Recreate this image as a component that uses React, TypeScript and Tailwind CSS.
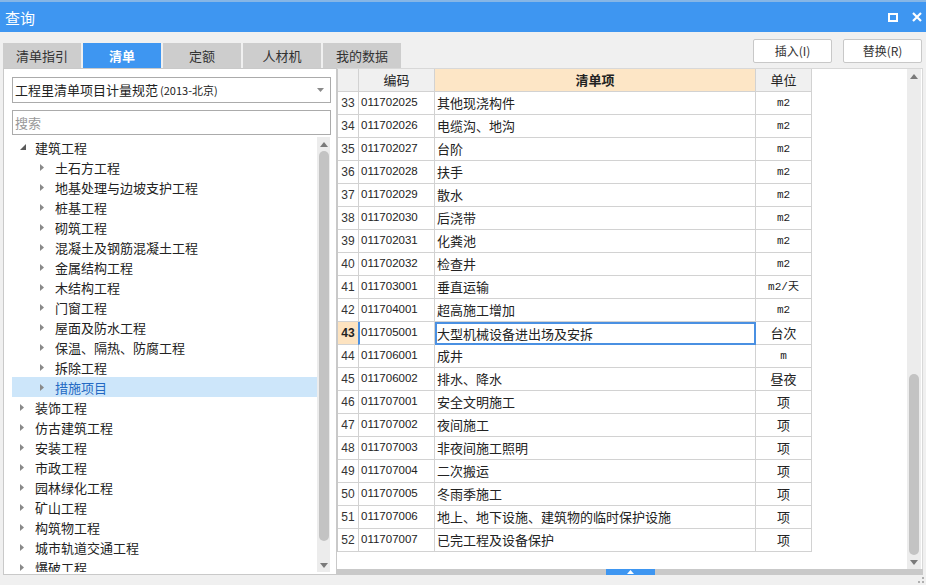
import React from 'react';

const tabs = ['清单指引', '清单', '定额', '人材机', '我的数据'];

const tree: { label: string; level: number; open?: boolean; selected?: boolean }[] = [
  { label: '建筑工程', level: 0, open: true },
  { label: '土石方工程', level: 1 },
  { label: '地基处理与边坡支护工程', level: 1 },
  { label: '桩基工程', level: 1 },
  { label: '砌筑工程', level: 1 },
  { label: '混凝土及钢筋混凝土工程', level: 1 },
  { label: '金属结构工程', level: 1 },
  { label: '木结构工程', level: 1 },
  { label: '门窗工程', level: 1 },
  { label: '屋面及防水工程', level: 1 },
  { label: '保温、隔热、防腐工程', level: 1 },
  { label: '拆除工程', level: 1 },
  { label: '措施项目', level: 1, selected: true },
  { label: '装饰工程', level: 0 },
  { label: '仿古建筑工程', level: 0 },
  { label: '安装工程', level: 0 },
  { label: '市政工程', level: 0 },
  { label: '园林绿化工程', level: 0 },
  { label: '矿山工程', level: 0 },
  { label: '构筑物工程', level: 0 },
  { label: '城市轨道交通工程', level: 0 },
  { label: '爆破工程', level: 0 },
];

const rows: [number, string, string, string][] = [
  [33, '011702025', '其他现浇构件', 'm2'],
  [34, '011702026', '电缆沟、地沟', 'm2'],
  [35, '011702027', '台阶', 'm2'],
  [36, '011702028', '扶手', 'm2'],
  [37, '011702029', '散水', 'm2'],
  [38, '011702030', '后浇带', 'm2'],
  [39, '011702031', '化粪池', 'm2'],
  [40, '011702032', '检查井', 'm2'],
  [41, '011703001', '垂直运输', 'm2/天'],
  [42, '011704001', '超高施工增加', 'm2'],
  [43, '011705001', '大型机械设备进出场及安拆', '台次'],
  [44, '011706001', '成井', 'm'],
  [45, '011706002', '排水、降水', '昼夜'],
  [46, '011707001', '安全文明施工', '项'],
  [47, '011707002', '夜间施工', '项'],
  [48, '011707003', '非夜间施工照明', '项'],
  [49, '011707004', '二次搬运', '项'],
  [50, '011707005', '冬雨季施工', '项'],
  [51, '011707006', '地上、地下设施、建筑物的临时保护设施', '项'],
  [52, '011707007', '已完工程及设备保护', '项'],
];

function Caret({ open }: { open?: boolean }) {
  if (open) {
    return (
      <svg width="6" height="6" viewBox="0 0 6 6">
        <polygon points="6,0 6,6 0,6" fill="#5a5a5a" />
      </svg>
    );
  }
  return (
    <svg width="4" height="7" viewBox="0 0 4 7">
      <polygon points="0,0 4,3.5 0,7" fill="#8a8a8a" />
    </svg>
  );
}

function ScrollBar({ thumbTop, thumbHeight, width }: { thumbTop: number; thumbHeight: number; width: string }) {
  return (
    <div className={`${width} flex flex-col items-center bg-[#ececec]`}>
      <div className="h-[14px] flex items-center justify-center">
        <svg width="8" height="5" viewBox="0 0 8 5">
          <polygon points="0,5 4,0 8,5" fill="#7a7a7a" />
        </svg>
      </div>
      <div className="flex-1 w-full flex flex-col items-center">
        <div style={{ height: thumbTop }} />
        <div className="w-[10px] rounded-full bg-[#c3c3c3]" style={{ height: thumbHeight }} />
        <div className="flex-1" />
      </div>
      <div className="h-[14px] flex items-center justify-center">
        <svg width="8" height="5" viewBox="0 0 8 5">
          <polygon points="0,0 8,0 4,5" fill="#7a7a7a" />
        </svg>
      </div>
    </div>
  );
}

export default function App() {
  return (
    <div className="w-[926px] h-[585px] bg-[#f0f0f0] flex flex-col overflow-hidden text-[12px] text-[#222] font-['Noto_Sans_CJK_SC',sans-serif]">
      {/* Title bar */}
      <div className="h-[32px] bg-[#3e96f1] border-t-2 border-[#86b6e6] flex items-center pl-[5px] pr-[4px] text-white">
        <span className="text-[15px] leading-none">查询</span>
        <div className="ml-auto flex items-center gap-[14px]">
          <svg width="10" height="9" viewBox="0 0 10 9">
            <rect x="1" y="1" width="8" height="7" fill="none" stroke="white" strokeWidth="2" />
          </svg>
          <svg width="10" height="10" viewBox="0 0 10 10">
            <path d="M1 1 L9 9 M9 1 L1 9" stroke="white" strokeWidth="2.2" />
          </svg>
        </div>
      </div>

      {/* Tabs + buttons */}
      <div className="h-[36px] flex pl-[3px] pr-[4px]">
        <div className="flex items-end gap-[2px]">
          {tabs.map((t, i) => (
            <div
              key={t}
              className={
                i === 1
                  ? 'w-[78px] h-[25px] flex items-center justify-center bg-[#3e96f1] text-white font-bold text-[13px]'
                  : 'w-[78px] h-[25px] flex items-center justify-center bg-[#cdcdcd] text-[#333] text-[13px]'
              }
            >
              {t}
            </div>
          ))}
        </div>
        <div className="ml-auto mt-[7px] flex gap-[11px]">
          <button className="w-[79px] h-[24px] bg-white border border-[#c8c8c8] rounded-[2px] text-[12px] text-[#333]">插入(I)</button>
          <button className="w-[79px] h-[24px] bg-white border border-[#c8c8c8] rounded-[2px] text-[12px] text-[#333]">替换(R)</button>
        </div>
      </div>

      {/* Main */}
      <div className="h-[507px] flex pl-[3px]">
        {/* Left panel */}
        <div className="w-[334px] bg-white border border-[#c9c9c9] flex flex-col pl-[8px] pr-[5px] pt-[8px]">
          <div className="h-[26px] border border-[#ababab] flex items-center pl-[2px] pr-[6px]">
            <span className="text-[13px]">工程里清单项目计量规范</span>
            <span className="text-[11px] ml-[2px]">(2013-北京)</span>
            <svg className="ml-auto" width="7" height="4" viewBox="0 0 7 4">
              <polygon points="0,0 7,0 3.5,4" fill="#8a8a8a" />
            </svg>
          </div>
          <div className="h-[25px] mt-[7px] border border-[#ababab] flex items-center pl-[2px] text-[13px] text-[#999]">搜索</div>
          <div className="flex-1 mt-[2px] flex min-h-0">
            <div className="w-[305px] overflow-hidden">
              {tree.map((n) => (
                <div
                  key={n.label}
                  className={`h-[20px] flex items-center ${n.selected ? 'bg-[#cde6fa] text-[#2369c3]' : ''} ${n.level === 0 ? 'pl-[8px]' : 'pl-[28px]'}`}
                >
                  <span className="w-[15px] flex items-center">
                    <Caret open={n.open} />
                  </span>
                  <span className="text-[13px] leading-none">{n.label}</span>
                </div>
              ))}
            </div>
            <ScrollBar width="w-[13px]" thumbTop={0} thumbHeight={390} />
          </div>
          <div className="h-[2px]" />
        </div>

        {/* Right panel */}
        <div className="w-[586px] flex flex-col">
          <div className="flex-1 flex bg-white border-t border-[#d8d8d8] border-r border-[#c9c9c9]">
            <div className="flex-1">
              <div className="grid grid-cols-[21px_76px_321px_56px] w-[475px] border-l border-[#c9c9c9]">
                <div className="h-[23px] bg-[#f0f0f0] border-r border-b border-[#d2d2d2]" />
                <div className="h-[23px] bg-[#f0f0f0] border-r border-b border-[#d2d2d2] flex items-center justify-center text-[13px]">编码</div>
                <div className="h-[23px] bg-[#fde6c6] border-r border-b border-[#d2d2d2] flex items-center justify-center text-[13px] font-bold">清单项</div>
                <div className="h-[23px] bg-[#f0f0f0] border-r border-b border-[#d2d2d2] flex items-center justify-center text-[13px]">单位</div>
                {rows.map(([n, code, name, unit]) => {
                  const sel = n === 43;
                  return (
                    <React.Fragment key={n}>
                      <div
                        className={`h-[23px] border-r border-b border-[#d2d2d2] flex items-center justify-center font-['Liberation_Sans',sans-serif] text-[12px] ${sel ? 'bg-[#fde3c0] font-bold' : 'text-[#333]'}`}
                      >
                        {n}
                      </div>
                      <div
                        className={`h-[23px] border-r border-b border-[#d2d2d2] flex items-center font-['Liberation_Sans',sans-serif] text-[11.5px] ${sel ? 'border-l-2 border-l-[#4a90e2] -ml-[1px] pl-[1px]' : 'pl-[2px]'}`}
                      >
                        {code}
                      </div>
                      <div
                        className={`h-[23px] flex items-center text-[13px] ${sel ? 'border-2 border-[#4a90e2] pl-0' : 'border-r border-b border-[#d2d2d2] pl-[2px]'}`}
                      >
                        {name}
                      </div>
                      <div className="h-[23px] border-r border-b border-[#d2d2d2] flex items-center justify-center font-['Liberation_Mono','Noto_Sans_CJK_SC',monospace] text-[11px]">
                        {unit === 'm2' || unit === 'm' || unit === 'm2/天' ? (
                          <span className="text-[11px]">{unit}</span>
                        ) : (
                          <span className="text-[13px] font-['Noto_Sans_CJK_SC',sans-serif]">{unit}</span>
                        )}
                      </div>
                    </React.Fragment>
                  );
                })}
              </div>
            </div>
            <div className="w-[15px] pr-[1px] flex">
              <ScrollBar width="w-[14px]" thumbTop={291} thumbHeight={181} />
            </div>
          </div>
          <div className="h-[6px] bg-[#c9c9c9] flex justify-center">
            <div className="w-[49px] h-full bg-[#3e96f1] flex items-center justify-center">
              <svg width="7" height="4" viewBox="0 0 7 4">
                <polygon points="0,4 3.5,0 7,4" fill="white" />
              </svg>
            </div>
          </div>
        </div>
      </div>

      {/* Bottom strip with grip */}
      <div className="flex-1 flex justify-end items-end pr-[2px] pb-[2px]">
        <svg width="6" height="6" viewBox="0 0 6 6">
          <rect x="4" y="0" width="2" height="2" fill="#b0b0b0" />
          <rect x="0" y="4" width="2" height="2" fill="#b0b0b0" />
          <rect x="4" y="4" width="2" height="2" fill="#b0b0b0" />
        </svg>
      </div>
    </div>
  );
}
